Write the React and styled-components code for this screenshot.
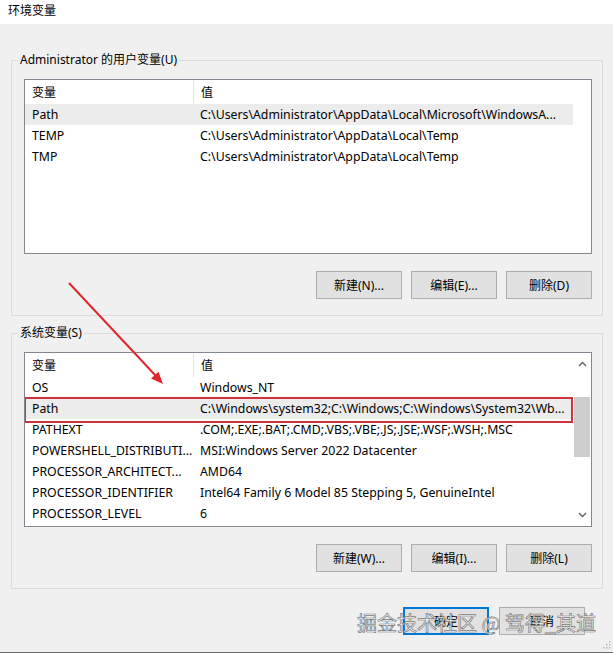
import React from "react";
import styled, { createGlobalStyle } from "styled-components";

const GlobalStyle = createGlobalStyle`
  html, body {
    margin: 0;
    padding: 0;
    background: #f0f0f0;
  }
  body {
    font-family: "Noto Sans", "Noto Sans CJK SC", sans-serif;
    font-size: 12px;
    color: #000;
  }
`;

const Window = styled.div`
  position: relative;
  width: 613px;
  height: 653px;
  box-sizing: border-box;
  background: #f0f0f0;
  border-bottom: 1px solid #6b6b6b;
  display: flex;
  flex-direction: column;
  overflow: hidden;
`;

const TitleBar = styled.div`
  height: 24px;
  background: #fff;
  padding-left: 8px;
  display: flex;
  align-items: center;
  padding-bottom: 4px;
  box-sizing: border-box;
  font-size: 12px;
`;

const Body = styled.div`
  display: flex;
  flex-direction: column;
  padding: 28px 10px 0 11px;
  gap: 9px;
`;

const Group = styled.fieldset`
  margin: 0;
  padding: 11px 10px 16px 12px;
  border: 1px solid #dcdcdc;
  min-width: 0;
`;

const Legend = styled.legend`
  margin-left: -6px;
  padding: 0 2px;
  line-height: 16px;
  font-size: 12px;
`;

const ListBox = styled.div`
  height: 175px;
  box-sizing: border-box;
  border: 1px solid #828790;
  background: #fff;
  display: flex;
  overflow: hidden;
`;

const ListBody = styled.div`
  flex: 1;
  min-width: 0;
  display: flex;
  flex-direction: column;
`;

const Row = styled.div`
  position: relative;
  display: grid;
  grid-template-columns: 168px 1fr;
  height: ${(p) => (p.header ? "24px" : "21px")};
  align-items: center;
  background: ${(p) => (p.selected ? "#ececec" : "#fff")};

  &::after {
    content: "";
    display: ${(p) => (p.marked ? "block" : "none")};
    position: absolute;
    z-index: 1;
    left: -1px;
    right: 0;
    top: -1px;
    bottom: -4px;
    border: 2px solid #d1313a;
    pointer-events: none;
  }
`;

const Cell = styled.div`
  white-space: nowrap;
  overflow: hidden;
  padding-left: 7px;
  height: 100%;
  display: flex;
  align-items: center;
  font-size: 12.3px;
  border-left: ${(p) => (p.divider ? "1px solid #e5e5e5" : "none")};
`;

const HeadCell = styled(Cell)`
  font-size: 12px;
`;

const Gutter = styled.div`
  width: 18px;
  flex: none;
  background: #fff;
`;

const ScrollBar = styled.div`
  width: 18px;
  flex: none;
  background: #fff;
  display: flex;
  flex-direction: column;
  align-items: center;
`;

const ScrollArrow = styled.div`
  height: 22px;
  width: 100%;
  display: flex;
  align-items: center;
  justify-content: center;
`;

const ScrollTrack = styled.div`
  flex: 1;
  width: 100%;
  padding-top: 22px;
  box-sizing: border-box;
`;

const Thumb = styled.div`
  height: 60px;
  margin: 0 1px;
  background: #cdcdcd;
`;

const ButtonRow = styled.div`
  display: flex;
  justify-content: flex-end;
  gap: 9px;
  margin-top: 17px;
`;

const Button = styled.button`
  width: 86px;
  height: 28px;
  box-sizing: border-box;
  background: #e1e1e1;
  border: ${(p) => (p.primary ? "2px solid #0078d7" : "1px solid #adadad")};
  font-family: inherit;
  font-size: 12px;
  color: #000;
  padding: 0;
`;

const Footer = styled.div`
  display: flex;
  justify-content: flex-end;
  gap: 10px;
  padding: 18px 28px 0 0;
`;

const Watermark = styled.div`
  position: absolute;
  left: 357px;
  top: 609px;
  font-family: "Noto Sans CJK SC", sans-serif;
  font-size: 20px;
  line-height: 28px;
  color: rgba(255, 255, 255, 0.92);
  -webkit-text-stroke: 0.7px #7a7a7a;
  white-space: nowrap;
  pointer-events: none;
`;

const ArrowLayer = styled.svg`
  position: absolute;
  left: 0;
  top: 0;
  pointer-events: none;
`;

const Grip = styled.svg`
  position: absolute;
  right: 2px;
  bottom: 3px;
`;

const userVars = [
  ["Path", "C:\\Users\\Administrator\\AppData\\Local\\Microsoft\\WindowsA..."],
  ["TEMP", "C:\\Users\\Administrator\\AppData\\Local\\Temp"],
  ["TMP", "C:\\Users\\Administrator\\AppData\\Local\\Temp"],
];

const sysVars = [
  ["OS", "Windows_NT"],
  ["Path", "C:\\Windows\\system32;C:\\Windows;C:\\Windows\\System32\\Wb..."],
  ["PATHEXT", ".COM;.EXE;.BAT;.CMD;.VBS;.VBE;.JS;.JSE;.WSF;.WSH;.MSC"],
  ["POWERSHELL_DISTRIBUTI...", "MSI:Windows Server 2022 Datacenter"],
  ["PROCESSOR_ARCHITECT...", "AMD64"],
  ["PROCESSOR_IDENTIFIER", "Intel64 Family 6 Model 85 Stepping 5, GenuineIntel"],
  ["PROCESSOR_LEVEL", "6"],
];

function Chevron({ up }) {
  return (
    <svg width="9" height="6" viewBox="0 0 9 6">
      <path
        d={up ? "M1 5 L4.5 1.5 L8 5" : "M1 1 L4.5 4.5 L8 1"}
        fill="none"
        stroke="#606060"
        strokeWidth="1.4"
      />
    </svg>
  );
}

function VarList({ rows, selected, marked, scroll }) {
  return (
    <ListBox>
      <ListBody>
        <Row header>
          <HeadCell>变量</HeadCell>
          <HeadCell divider>值</HeadCell>
        </Row>
        {rows.map(([name, value], i) => (
          <Row key={name} selected={i === selected} marked={i === marked}>
            <Cell>{name}</Cell>
            <Cell>{value}</Cell>
          </Row>
        ))}
      </ListBody>
      {scroll ? (
        <ScrollBar>
          <ScrollArrow>
            <Chevron up />
          </ScrollArrow>
          <ScrollTrack>
            <Thumb />
          </ScrollTrack>
          <ScrollArrow>
            <Chevron />
          </ScrollArrow>
        </ScrollBar>
      ) : (
        <Gutter />
      )}
    </ListBox>
  );
}

export default function App() {
  return (
    <Window>
      <GlobalStyle />
      <TitleBar>环境变量</TitleBar>
      <Body>
        <Group>
          <Legend>Administrator 的用户变量(U)</Legend>
          <VarList rows={userVars} selected={0} />
          <ButtonRow>
            <Button>新建(N)...</Button>
            <Button>编辑(E)...</Button>
            <Button>删除(D)</Button>
          </ButtonRow>
        </Group>
        <Group>
          <Legend>系统变量(S)</Legend>
          <VarList rows={sysVars} selected={1} marked={1} scroll />
          <ButtonRow>
            <Button>新建(W)...</Button>
            <Button>编辑(I)...</Button>
            <Button>删除(L)</Button>
          </ButtonRow>
        </Group>
      </Body>
      <Footer>
        <Button primary>确定</Button>
        <Button>取消</Button>
      </Footer>

      <ArrowLayer width="613" height="653">
        <line x1="69" y1="283" x2="156" y2="376" stroke="#e0262d" strokeWidth="2" />
        <polygon points="163,384 151,378.6 158.5,371.8" fill="#e0262d" />
      </ArrowLayer>
      <Watermark>掘金技术社区 @ 驾得_其道</Watermark>
      <Grip width="8" height="8" viewBox="0 0 8 8">
        <rect x="6" y="0" width="1.5" height="1.5" fill="#b8b8b8" />
        <rect x="3" y="3" width="1.5" height="1.5" fill="#b8b8b8" />
        <rect x="6" y="3" width="1.5" height="1.5" fill="#b8b8b8" />
        <rect x="0" y="6" width="1.5" height="1.5" fill="#b8b8b8" />
        <rect x="3" y="6" width="1.5" height="1.5" fill="#b8b8b8" />
        <rect x="6" y="6" width="1.5" height="1.5" fill="#b8b8b8" />
      </Grip>
    </Window>
  );
}
